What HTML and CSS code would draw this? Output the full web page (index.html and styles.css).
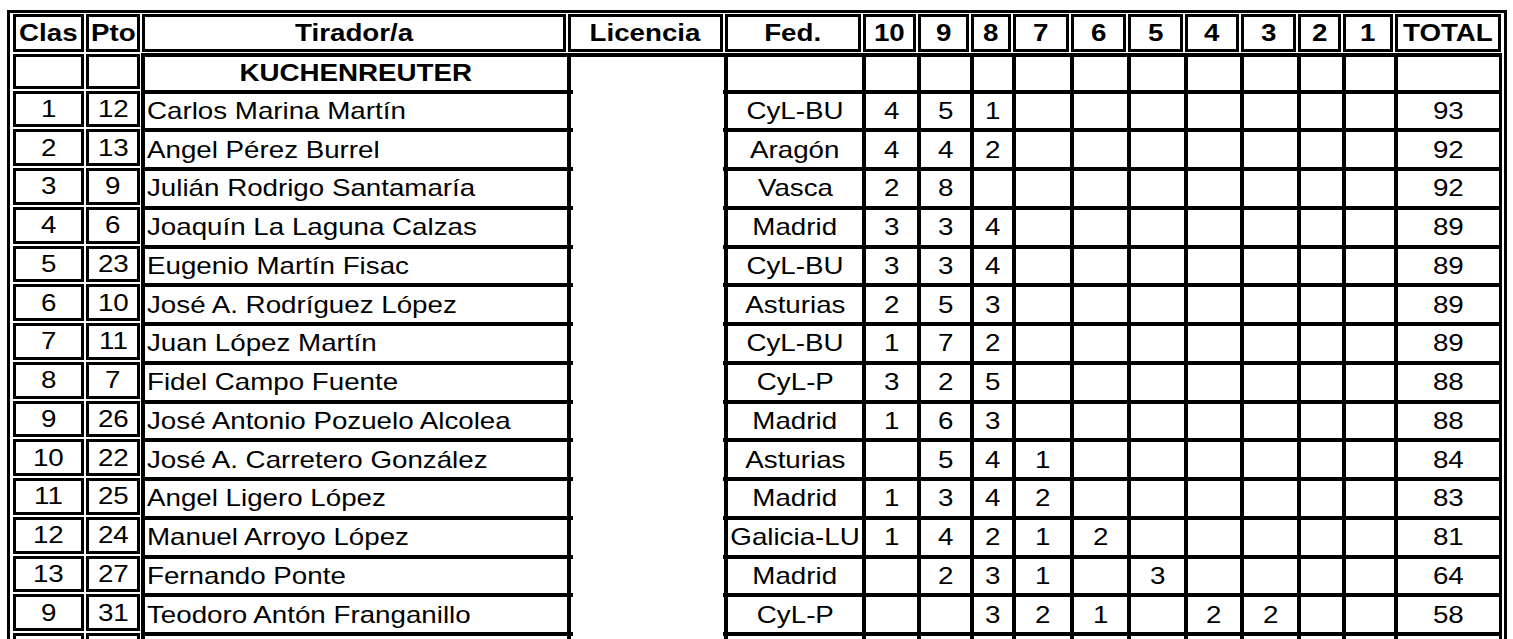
FILE: index.html
```html
<!DOCTYPE html>
<html lang="es">
<head>
<meta charset="utf-8">
<title>Clasificación</title>
<link rel="stylesheet" href="styles.css">
</head>
<body>
<div class="sheet">
  <div class="grid">
    <div class="hd"><span>Clas</span></div><div class="hd"><span>Pto</span></div><div class="hd"><span>Tirador/a</span></div><div class="hd"><span>Licencia</span></div><div class="hd"><span>Fed.</span></div><div class="hd"><span>10</span></div><div class="hd"><span>9</span></div><div class="hd"><span>8</span></div><div class="hd"><span>7</span></div><div class="hd"><span>6</span></div><div class="hd"><span>5</span></div><div class="hd"><span>4</span></div><div class="hd"><span>3</span></div><div class="hd"><span>2</span></div><div class="hd"><span>1</span></div><div class="hd"><span>TOTAL</span></div>

    <div class="bx"></div><div class="bx"></div><div class="c cat"><span>KUCHENREUTER</span></div><div class="c lic first"></div><div class="c"></div><div class="c"></div><div class="c"></div><div class="c"></div><div class="c"></div><div class="c"></div><div class="c"></div><div class="c"></div><div class="c"></div><div class="c"></div><div class="c"></div><div class="c tot"></div>

    <div class="bx"><span>1</span></div><div class="bx"><span>12</span></div><div class="c nm"><span>Carlos Marina Martín</span></div><div class="c lic"></div><div class="c"><span>CyL-BU</span></div><div class="c"><span>4</span></div><div class="c"><span>5</span></div><div class="c"><span>1</span></div><div class="c"></div><div class="c"></div><div class="c"></div><div class="c"></div><div class="c"></div><div class="c"></div><div class="c"></div><div class="c tot"><span>93</span></div>

    <div class="bx"><span>2</span></div><div class="bx"><span>13</span></div><div class="c nm"><span>Angel Pérez Burrel</span></div><div class="c lic"></div><div class="c"><span>Aragón</span></div><div class="c"><span>4</span></div><div class="c"><span>4</span></div><div class="c"><span>2</span></div><div class="c"></div><div class="c"></div><div class="c"></div><div class="c"></div><div class="c"></div><div class="c"></div><div class="c"></div><div class="c tot"><span>92</span></div>

    <div class="bx"><span>3</span></div><div class="bx"><span>9</span></div><div class="c nm"><span>Julián Rodrigo Santamaría</span></div><div class="c lic"></div><div class="c"><span>Vasca</span></div><div class="c"><span>2</span></div><div class="c"><span>8</span></div><div class="c"></div><div class="c"></div><div class="c"></div><div class="c"></div><div class="c"></div><div class="c"></div><div class="c"></div><div class="c"></div><div class="c tot"><span>92</span></div>

    <div class="bx"><span>4</span></div><div class="bx"><span>6</span></div><div class="c nm"><span>Joaquín La Laguna Calzas</span></div><div class="c lic"></div><div class="c"><span>Madrid</span></div><div class="c"><span>3</span></div><div class="c"><span>3</span></div><div class="c"><span>4</span></div><div class="c"></div><div class="c"></div><div class="c"></div><div class="c"></div><div class="c"></div><div class="c"></div><div class="c"></div><div class="c tot"><span>89</span></div>

    <div class="bx"><span>5</span></div><div class="bx"><span>23</span></div><div class="c nm"><span>Eugenio Martín Fisac</span></div><div class="c lic"></div><div class="c"><span>CyL-BU</span></div><div class="c"><span>3</span></div><div class="c"><span>3</span></div><div class="c"><span>4</span></div><div class="c"></div><div class="c"></div><div class="c"></div><div class="c"></div><div class="c"></div><div class="c"></div><div class="c"></div><div class="c tot"><span>89</span></div>

    <div class="bx"><span>6</span></div><div class="bx"><span>10</span></div><div class="c nm"><span>José A. Rodríguez López</span></div><div class="c lic"></div><div class="c"><span>Asturias</span></div><div class="c"><span>2</span></div><div class="c"><span>5</span></div><div class="c"><span>3</span></div><div class="c"></div><div class="c"></div><div class="c"></div><div class="c"></div><div class="c"></div><div class="c"></div><div class="c"></div><div class="c tot"><span>89</span></div>

    <div class="bx"><span>7</span></div><div class="bx"><span>11</span></div><div class="c nm"><span>Juan López Martín</span></div><div class="c lic"></div><div class="c"><span>CyL-BU</span></div><div class="c"><span>1</span></div><div class="c"><span>7</span></div><div class="c"><span>2</span></div><div class="c"></div><div class="c"></div><div class="c"></div><div class="c"></div><div class="c"></div><div class="c"></div><div class="c"></div><div class="c tot"><span>89</span></div>

    <div class="bx"><span>8</span></div><div class="bx"><span>7</span></div><div class="c nm"><span>Fidel Campo Fuente</span></div><div class="c lic"></div><div class="c"><span>CyL-P</span></div><div class="c"><span>3</span></div><div class="c"><span>2</span></div><div class="c"><span>5</span></div><div class="c"></div><div class="c"></div><div class="c"></div><div class="c"></div><div class="c"></div><div class="c"></div><div class="c"></div><div class="c tot"><span>88</span></div>

    <div class="bx"><span>9</span></div><div class="bx"><span>26</span></div><div class="c nm"><span>José Antonio Pozuelo Alcolea</span></div><div class="c lic"></div><div class="c"><span>Madrid</span></div><div class="c"><span>1</span></div><div class="c"><span>6</span></div><div class="c"><span>3</span></div><div class="c"></div><div class="c"></div><div class="c"></div><div class="c"></div><div class="c"></div><div class="c"></div><div class="c"></div><div class="c tot"><span>88</span></div>

    <div class="bx"><span>10</span></div><div class="bx"><span>22</span></div><div class="c nm"><span>José A. Carretero González</span></div><div class="c lic"></div><div class="c"><span>Asturias</span></div><div class="c"></div><div class="c"><span>5</span></div><div class="c"><span>4</span></div><div class="c"><span>1</span></div><div class="c"></div><div class="c"></div><div class="c"></div><div class="c"></div><div class="c"></div><div class="c"></div><div class="c tot"><span>84</span></div>

    <div class="bx"><span>11</span></div><div class="bx"><span>25</span></div><div class="c nm"><span>Angel Ligero López</span></div><div class="c lic"></div><div class="c"><span>Madrid</span></div><div class="c"><span>1</span></div><div class="c"><span>3</span></div><div class="c"><span>4</span></div><div class="c"><span>2</span></div><div class="c"></div><div class="c"></div><div class="c"></div><div class="c"></div><div class="c"></div><div class="c"></div><div class="c tot"><span>83</span></div>

    <div class="bx"><span>12</span></div><div class="bx"><span>24</span></div><div class="c nm"><span>Manuel Arroyo López</span></div><div class="c lic"></div><div class="c"><span>Galicia-LU</span></div><div class="c"><span>1</span></div><div class="c"><span>4</span></div><div class="c"><span>2</span></div><div class="c"><span>1</span></div><div class="c"><span>2</span></div><div class="c"></div><div class="c"></div><div class="c"></div><div class="c"></div><div class="c"></div><div class="c tot"><span>81</span></div>

    <div class="bx"><span>13</span></div><div class="bx"><span>27</span></div><div class="c nm"><span>Fernando Ponte</span></div><div class="c lic"></div><div class="c"><span>Madrid</span></div><div class="c"></div><div class="c"><span>2</span></div><div class="c"><span>3</span></div><div class="c"><span>1</span></div><div class="c"></div><div class="c"><span>3</span></div><div class="c"></div><div class="c"></div><div class="c"></div><div class="c"></div><div class="c tot"><span>64</span></div>

    <div class="bx"><span>9</span></div><div class="bx"><span>31</span></div><div class="c nm"><span>Teodoro Antón Franganillo</span></div><div class="c lic"></div><div class="c"><span>CyL-P</span></div><div class="c"></div><div class="c"></div><div class="c"><span>3</span></div><div class="c"><span>2</span></div><div class="c"><span>1</span></div><div class="c"></div><div class="c"><span>2</span></div><div class="c"><span>2</span></div><div class="c"></div><div class="c"></div><div class="c tot"><span>58</span></div>

    <div class="bx"></div><div class="bx"></div><div class="c nm"></div><div class="c lic"></div><div class="c"></div><div class="c"></div><div class="c"></div><div class="c"></div><div class="c"></div><div class="c"></div><div class="c"></div><div class="c"></div><div class="c"></div><div class="c"></div><div class="c"></div><div class="c tot"></div>
  </div>
</div>
</body>
</html>
```

FILE: styles.css
```css
html, body {
  margin: 0;
  padding: 0;
  background: #fff;
  overflow: hidden;
}

body {
  font-family: "Liberation Sans", Arial, sans-serif;
  font-size: 24px;
  color: #000;
}

.sheet {
  margin: 10px 0 0 7px;
  width: 1500px;
  box-sizing: border-box;
  border: 3px solid #000;
  padding: 1px 2px 0 2px;
}

.grid {
  display: grid;
  grid-template-columns: 73px 56px 426px 157px 138px 55px 53px 42px 58px 57px 57px 56px 57px 45px 52px 108px;
  grid-template-rows: 39px 36.5px;
  grid-auto-rows: 38.75px;
}

.hd,
.bx,
.c {
  display: flex;
  align-items: center;
  justify-content: center;
  white-space: nowrap;
}

.hd span,
.bx span,
.c span {
  display: inline-block;
  transform: scaleX(1.155);
}

.hd {
  margin: 0 1px 1px;
  border: 3px solid #000;
  font-weight: bold;
  font-size: 24px;
}

.bx {
  margin: 1px;
  border: 3px solid #000;
}

.c {
  border-left: 4px solid #000;
  border-top: 4px solid #000;
}

.nm {
  justify-content: flex-start;
  padding-left: 2px;
}

.nm span {
  transform-origin: left center;
}

.cat {
  font-weight: bold;
  font-size: 24px;
}

.lic {
  border-top: 0;
  position: relative;
}

.lic::before,
.lic::after {
  content: "";
  position: absolute;
  top: 0;
  height: 4px;
  background: #000;
}

.lic::before {
  left: 0;
  width: 2px;
}

.lic::after {
  right: 0;
  width: 1px;
}

.lic.first {
  border-top: 4px solid #000;
}

.lic.first::before,
.lic.first::after {
  display: none;
}

.tot {
  border-right: 3px solid #000;
}
```
